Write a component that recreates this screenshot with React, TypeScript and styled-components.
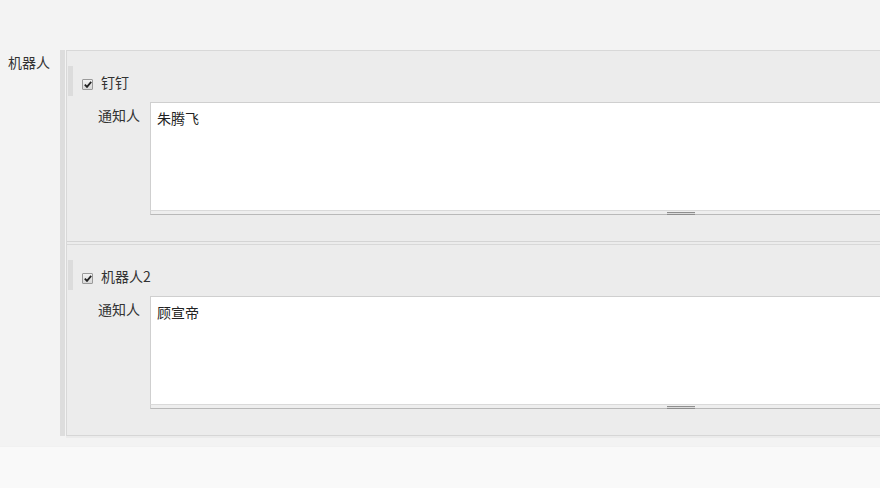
import React from "react";
import styled, { createGlobalStyle } from "styled-components";

const Global = createGlobalStyle`
  html, body { margin: 0; padding: 0; }
  body {
    background: #f9f9f9;
    font-family: "Noto Sans CJK SC", "Noto Sans", sans-serif;
    font-size: 14px;
    color: #333;
    overflow: hidden;
  }
`;

const Page = styled.div`
  width: 880px;
  height: 488px;
  overflow: hidden;
  background: #f9f9f9;
`;

const Form = styled.div`
  background: #f3f3f3;
  padding-top: 50px;
  padding-bottom: 10px;
  border-bottom: 1px solid #f1f1f1;
`;

const FieldRow = styled.div`
  display: grid;
  grid-template-columns: 60px 1fr;
`;

const FieldLabel = styled.div`
  padding: 2px 0 0 8px;
  font-size: 14px;
  line-height: 20px;
  color: #333;
`;

const Group = styled.div`
  border-left: 5px solid #dddddd;
  padding-left: 1px;
  width: 900px;
`;

const Panel = styled.div`
  background: #ececec;
  border-top: 1px solid #d8d8d8;
  border-left: 1px solid #d8d8d8;
  border-bottom: 1px solid #d6d6d6;
  box-shadow: 0 2px 0 #ebebeb;
`;

const Item = styled.div<{ $first?: boolean }>`
  padding: 15px 0 26px 1px;
  border-top: ${(p) => (p.$first ? "none" : "1px solid #d8d8d8")};
  ${(p) => (p.$first ? "" : "margin-top: 2px;")}
  ${(p) => (p.$first ? "border-bottom: 1px solid #d4d4d4;" : "")}
`;

const Head = styled.div`
  display: flex;
  align-items: center;
  height: 30px;
  border-left: 5px solid #dcdcdc;
`;

const Check = styled.span`
  width: 11px;
  height: 11px;
  margin-left: 9px;
  margin-right: 8px;
  box-sizing: border-box;
  border: 1px solid #9a9a9a;
  border-radius: 1px;
  background: linear-gradient(#f2f2f2, #d8d8d8);
  display: flex;
  align-items: center;
  justify-content: center;
  position: relative;
  top: 3px;
`;

const HeadText = styled.span`
  font-size: 14px;
  line-height: 20px;
  color: #333;
  position: relative;
  top: 1px;
`;

const Body = styled.div`
  display: grid;
  grid-template-columns: 82px 1fr;
  margin-top: 6px;
`;

const SubLabel = styled.div`
  text-align: right;
  padding-right: 10px;
  padding-top: 3px;
  font-size: 14px;
  line-height: 20px;
  color: #333;
`;

const Area = styled.div`
  display: flex;
  flex-direction: column;
`;

const TextBox = styled.div`
  height: 108px;
  box-sizing: border-box;
  background: #fff;
  border: 1px solid #cfcfcf;
  border-bottom: none;
  padding: 5px 6px;
  font-size: 14px;
  line-height: 20px;
  color: #222;
`;

const Resizer = styled.div`
  height: 5px;
  box-sizing: border-box;
  border-top: 1px solid #dadada;
  border-bottom: 1px solid #b9b9b9;
  border-left: 1px solid #cfcfcf;
  background: #eeeeee;
  position: relative;
`;

const Grip = styled.span`
  position: absolute;
  left: 516px;
  top: 1px;
  width: 28px;
  height: 3px;
  box-sizing: border-box;
  border-top: 1px solid #8e8e8e;
  border-bottom: 1px solid #8e8e8e;
  background: #dcdcdc;
`;

const CheckIcon = () => (
  <svg width="8" height="7" viewBox="0 0 8 7">
    <path d="M0.8 3.6 L3 5.9 L7.2 0.9" fill="none" stroke="#222" strokeWidth="1.8" />
  </svg>
);

const robots = [
  { name: "钉钉", person: "朱腾飞" },
  { name: "机器人2", person: "顾宣帝" },
];

export default function App() {
  return (
    <Page>
      <Global />
      <Form>
        <FieldRow>
          <FieldLabel>机器人</FieldLabel>
          <Group>
            <Panel>
              {robots.map((r, i) => (
                <Item key={r.name} $first={i === 0}>
                  <Head>
                    <Check>
                      <CheckIcon />
                    </Check>
                    <HeadText>{r.name}</HeadText>
                  </Head>
                  <Body>
                    <SubLabel>通知人</SubLabel>
                    <Area>
                      <TextBox>{r.person}</TextBox>
                      <Resizer>
                        <Grip />
                      </Resizer>
                    </Area>
                  </Body>
                </Item>
              ))}
            </Panel>
          </Group>
        </FieldRow>
      </Form>
    </Page>
  );
}
